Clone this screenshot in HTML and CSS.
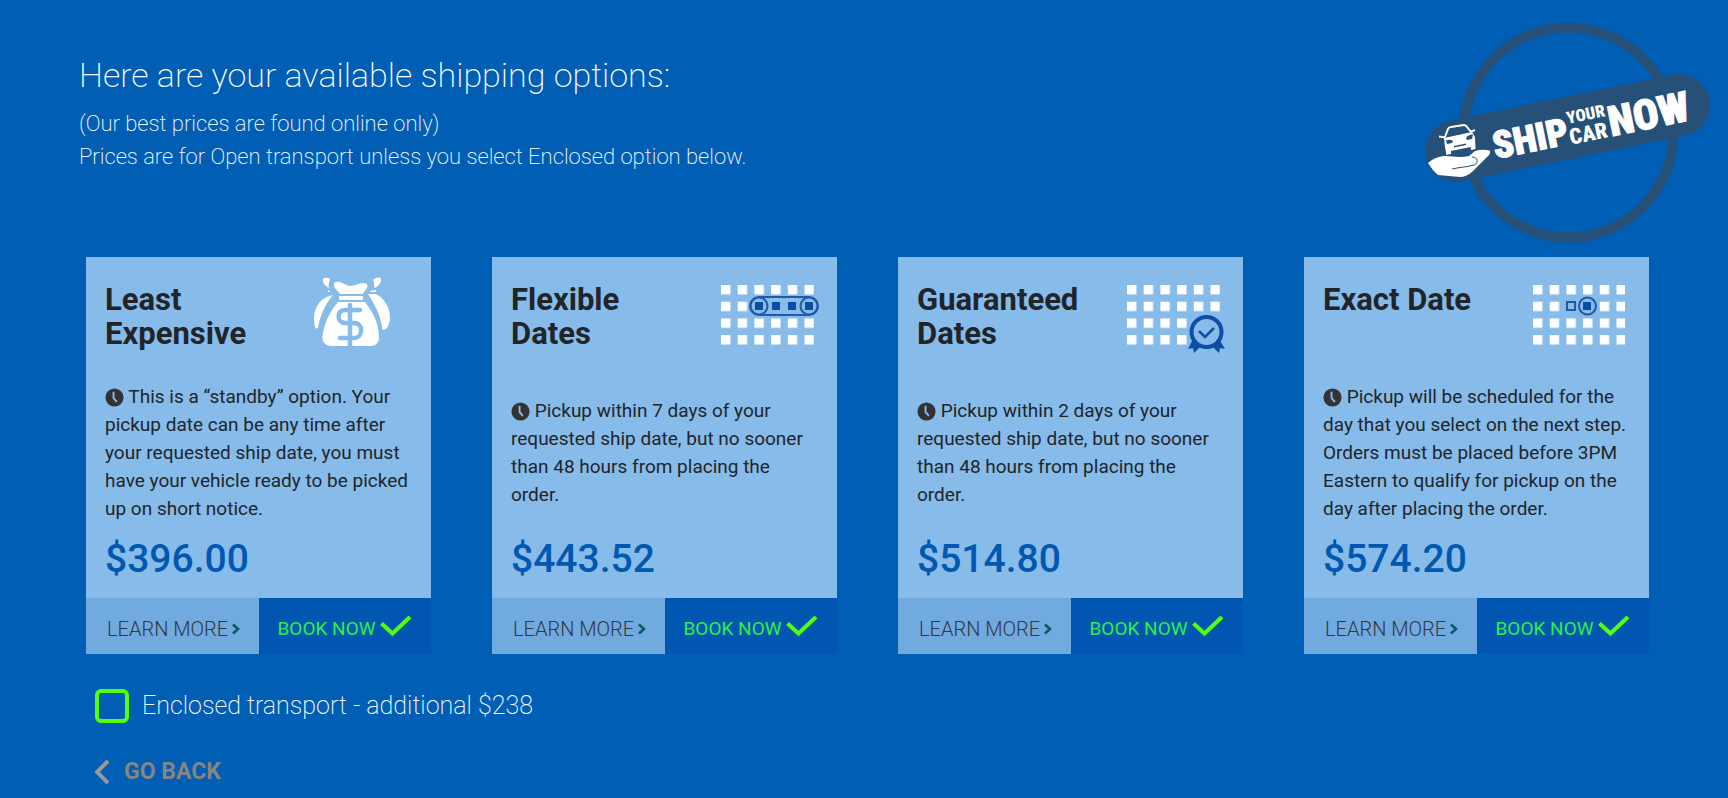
FILE: index.html
```html
<!DOCTYPE html>
<html lang="en">
<head>
<meta charset="utf-8">
<title>Shipping options</title>
<link rel="stylesheet" href="styles.css">
</head>
<body>
<svg class="defs" aria-hidden="true">
  <defs>
    <pattern id="days" width="16.7" height="16.7" patternUnits="userSpaceOnUse"><rect width="9.4" height="9.4" fill="#fff"/></pattern>
    <symbol id="clock" viewBox="0 0 20 20"><circle cx="10" cy="10" r="9.5" fill="#333"/><path d="M9 4v6.600l3.500 4" fill="none" stroke="#87bbea" stroke-width="2"/></symbol>
    <symbol id="next" viewBox="0 0 8 12"><path d="M1 1.500l5 4.500-5 4.500" fill="none" stroke="#075a66" stroke-width="2.500"/></symbol>
    <symbol id="check" viewBox="0 0 32 22"><path d="M1.500 8.500l11 10L30 2" fill="none" stroke="#53ff0d" stroke-width="4"/></symbol>
  </defs>
</svg>
<header class="header">
  <div class="intro">
    <h1 class="heading">Here are your available shipping options:</h1>
    <p class="note">(Our best prices are found online only)<br>Prices are for Open transport unless you select Enclosed option below.</p>
  </div>
  <svg class="logo" viewBox="24 20 288 226" role="img" aria-label="Ship Your Car Now">
    <circle cx="168.500" cy="132.500" r="105" fill="none" stroke="#265077" stroke-width="10"/>
    <path d="M56 151L279 105" stroke="#265077" stroke-width="62" stroke-linecap="round"/>
    <path d="M28 163C34 158 40 156 45 156c7 0 15 2 24 0l6-5q7-2 15-.5 1 3.500-4 7.500L72 172q-6 5-12 5l-22-2q-6-5-10-12z" fill="#fff"/>
    <path d="M72 157c6 0 7 6 2 8-6 2-14 2-22 4" fill="none" stroke="#265077"/>
    <path d="M45 137l3-8q1-2 3-2l13-2q2 0 3 2l4 5M39 136.500l6 1M70 132l5-2" fill="none" stroke="#fff" stroke-width="2"/>
    <path fill="#fff" fill-rule="evenodd" d="M44 138l28-6 3 5 .5 12-4.500 1-.5-3-19.500 4v3l-4.500 1-1.500-8zM46 140.500l1 3.500 5-1 1-2q-3-2-7-.5zM66 138l1 2 5-1 1-4.500q-5 0-7 3.500zM54 146l12-2.500v1.500L54 147.500z"/>
    <g class="wordmark" transform="rotate(-11.5 96 162)">
      <text class="word-big" x="96" y="159">SHIP</text>
      <text class="word-small" x="174" y="139">YOUR</text>
      <text class="word-small word-car" x="173" y="160">CAR</text>
      <text class="word-big word-now" x="214" y="160">NOW</text>
    </g>
  </svg>
</header>
<main class="main">
  <div class="cards">
    <section class="card">
      <div class="card-top">
        <h2 class="title">Least Expensive</h2>
        <svg class="icon bag" viewBox="0 0 76 70">
          <g fill="#fff"><path d="M9 2c2-2 5-1 7 0-1 5-2 6-1 9-4-2-7-6-6-9zM59 3c3-3 7-3 8-1 0 5-3 7-6 9-2-2 0-5-2-8zM14 13l3 2h-3zM56 14l6-1v2h-6zM4 51c-2 1-3 0-3-1C-3 34 5 20 19 18 12 26 6 38 4 51zM54 17l8 0c14 7 17 25 11 34-2 2-4 2-5 1C67 37 59 25 54 17z"/><path d="M20 6c5-4 11 2 16 3 7 0 11-5 17-2 2 5-3 6-4 10H26c-2-4-7-5-6-11zM25 19h24v4H25zM24 25h27c10 13 14 23 14 36 0 5-4 8-8 8H18c-8 0-11-5-9-13 2-12 8-23 15-31z"/></g>
          <path d="M21 23C13 33 8 44 6 55M53 23C61 33 65 42 67 54" fill="none" stroke="#87bbea" stroke-width="3"/>
          <path d="M46 33H31c-9 0-8 13 0 13h9c10 0 9 15 0 15H26M36 28v41" fill="none" stroke="#87bbea" stroke-width="4.500" stroke-linecap="round"/>
        </svg>
      </div>
      <p class="desc"><svg class="clock"><use href="#clock"/></svg> This is a “standby” option. Your pickup date can be any time after your requested ship date, you must have your vehicle ready to be picked up on short notice.</p>
      <p class="price">$396.00</p>
      <div class="actions"><button class="learn">LEARN MORE <svg class="next"><use href="#next"/></svg></button><button class="book">BOOK NOW <svg class="check"><use href="#check"/></svg></button></div>
    </section>
    <section class="card">
      <div class="card-top">
        <h2 class="title">Flexible Dates</h2>
        <svg class="icon" viewBox="0 0 100 72">
          <rect width="93" height="60" fill="url(#days)"/>
          <rect x="29" y="12" width="68" height="18" rx="9" fill="#87bbea" stroke="#2059aa" stroke-width="2"/>
          <g fill="none" stroke="#2059aa" stroke-width="2"><circle cx="38" cy="21" r="8.500"/><circle cx="88" cy="21" r="8.500"/></g>
          <path d="M34 17h8v8h-8zM51 17h8v8h-8zM67 17h8v8h-8zM84 17h8v8h-8z" fill="#0d4da5"/>
        </svg>
      </div>
      <p class="desc"><svg class="clock"><use href="#clock"/></svg> Pickup within 7 days of your requested ship date, but no sooner than 48 hours from placing the order.</p>
      <p class="price">$443.52</p>
      <div class="actions"><button class="learn">LEARN MORE <svg class="next"><use href="#next"/></svg></button><button class="book">BOOK NOW <svg class="check"><use href="#check"/></svg></button></div>
    </section>
    <section class="card">
      <div class="card-top">
        <h2 class="title">Guaranteed Dates</h2>
        <svg class="icon" viewBox="0 0 100 72">
          <path d="M0 0h93v28H60v32H0z" fill="url(#days)"/>
          <path d="M66 54l-5 10 5-1 1 5 7-7M92 54l6 10-5-1-1 5-7-7" fill="#0d4da5"/>
          <circle cx="79.500" cy="47" r="15" fill="#87bbea" stroke="#0d4da5" stroke-width="4"/>
          <path d="M72 46l6 6 9-9" fill="none" stroke="#0d4da5" stroke-width="2.500"/>
        </svg>
      </div>
      <p class="desc"><svg class="clock"><use href="#clock"/></svg> Pickup within 2 days of your requested ship date, but no sooner than 48 hours from placing the order.</p>
      <p class="price">$514.80</p>
      <div class="actions"><button class="learn">LEARN MORE <svg class="next"><use href="#next"/></svg></button><button class="book">BOOK NOW <svg class="check"><use href="#check"/></svg></button></div>
    </section>
    <section class="card">
      <div class="card-top">
        <h2 class="title">Exact Date</h2>
        <svg class="icon" viewBox="0 0 100 72">
          <rect width="92" height="60" fill="url(#days)"/>
          <path d="M30 14h34v14H30z" fill="#87bbea"/>
          <path d="M34 17h8v8h-8z" fill="none" stroke="#2059aa" stroke-width="2"/>
          <circle cx="54.500" cy="21" r="8.500" fill="#87bbea" stroke="#2059aa" stroke-width="2"/>
          <path d="M50 17h8v8h-8z" fill="#0d4da5"/>
        </svg>
      </div>
      <p class="desc"><svg class="clock"><use href="#clock"/></svg> Pickup will be scheduled for the day that you select on the next step. Orders must be placed before 3PM Eastern to qualify for pickup on the day after placing the order.</p>
      <p class="price">$574.20</p>
      <div class="actions"><button class="learn">LEARN MORE <svg class="next"><use href="#next"/></svg></button><button class="book">BOOK NOW <svg class="check"><use href="#check"/></svg></button></div>
    </section>
  </div>
  <label class="enclosed"><input class="box" type="checkbox">Enclosed transport - additional $238</label>
  <a class="back" href="#"><svg class="prev" viewBox="0 0 14 24"><path d="M13 1L2 12l11 11" fill="none" stroke="#999" stroke-width="4"/></svg>GO BACK</a>
</main>
</body>
</html>
```
FILE: styles.css
```css
* { box-sizing: border-box; }
body {
  margin: 0;
  background: #005eb4;
  color: #fff;
  font-family: Roboto, "Liberation Sans", sans-serif;
}
.defs { position: absolute; width: 0; height: 0; }
h1, h2, p { margin: 0; }

.header {
  display: flex;
  justify-content: space-between;
  align-items: flex-start;
  padding: 20px 16px 11px 79px;
}
.intro { padding-top: 32px; }
.heading { font-size: 34px; font-weight: 200; line-height: 46px; }
.note { margin-top: 9px; font-size: 22px; font-weight: 200; line-height: 33px; }
.logo { width: 288px; height: 226px; flex: none; }
.wordmark {
  fill: #fff;
  stroke: #fff;
  font-family: "Liberation Sans Narrow", "Roboto Condensed", Roboto, sans-serif;
  font-weight: 900;
}
.word-big { font-size: 38px; stroke-width: 1px; }
.word-now { font-size: 42px; }
.word-small { font-size: 17px; stroke-width: 0; }
.word-car { font-size: 22px; }

.main { padding: 0 79px 0 86px; }
.cards { display: grid; grid-template-columns: repeat(4, 1fr); gap: 61px; }
.card {
  display: flex;
  flex-direction: column;
  background: #87bbea;
  color: #212529;
}
.card-top {
  display: flex;
  justify-content: space-between;
  padding: 26px 16px 0 19px;
}
.title { flex: 0 1 170px; font-size: 31px; font-weight: 700; line-height: 34px; }
.icon { width: 100px; height: 72px; flex: none; margin-top: 2px; }
.icon.bag { width: 76px; height: 70px; margin: -6px 25px 10px 0; }
.desc {
  flex: 1;
  align-content: center;
  min-height: 166px;
  padding: 26px 18px 0 19px;
  font-size: 19px;
  line-height: 28px;
}
.clock { width: 19px; height: 19px; vertical-align: -4px; }
.price {
  padding: 10px 19px 13px;
  color: #0058b0;
  font-size: 39px;
  font-weight: 500;
  line-height: 52px;
}
.actions { display: grid; grid-template-columns: 1fr 1fr; height: 56px; }
.learn, .book {
  display: flex;
  align-items: center;
  gap: 4px;
  border: 0;
  padding: 6px 0 0 21px;
  font-family: inherit;
  font-size: 19px;
  line-height: 24px;
  white-space: nowrap;
}
.learn { background: #70aadf; color: #33383d; font-size: 20px; font-weight: 300; }
.book { background: #0056b0; color: #2df04c; padding-left: 19px; }
.next { width: 8px; height: 12px; flex: none; }
.check { width: 32px; height: 22px; flex: none; margin-bottom: 6px; }

.enclosed {
  display: flex;
  align-items: center;
  gap: 13px;
  width: fit-content;
  margin: 33px 0 0 9px;
  font-size: 25px;
  font-weight: 200;
  line-height: 38px;
}
.box {
  appearance: none;
  width: 34px;
  height: 34px;
  margin: 0;
  border: 4px solid #53ff0d;
  border-radius: 6px;
}
.back {
  display: flex;
  align-items: center;
  gap: 15px;
  width: fit-content;
  margin: 31px 0 0 9px;
  color: #858585;
  font-size: 23px;
  font-weight: 700;
  line-height: 32px;
  text-decoration: none;
}
.prev { width: 14px; height: 24px; }
```
